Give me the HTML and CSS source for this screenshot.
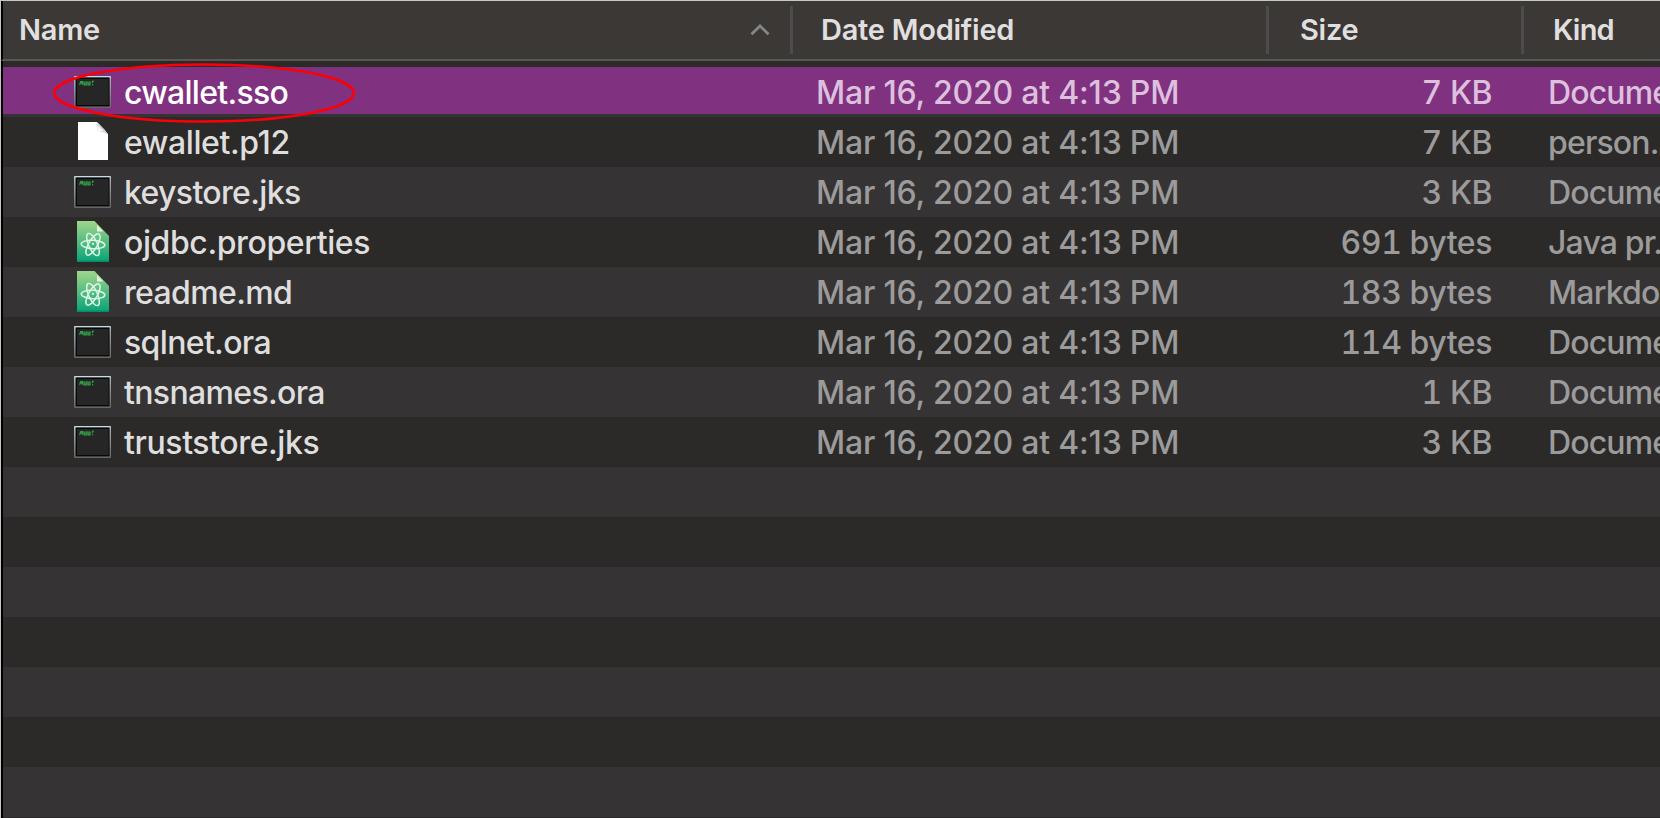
FILE: index.html
```html
<!DOCTYPE html>
<html lang="en">
<head>
<meta charset="utf-8">
<title>Files</title>
<link rel="stylesheet" href="styles.css">
</head>
<body>
<svg class="defs" width="0" height="0" aria-hidden="true">
  <defs>
    <linearGradient id="frame" x1="0" y1="0" x2="0" y2="1"><stop offset="0" stop-color="#c9e2ea"/><stop offset=".1" stop-color="#a3b0b6"/><stop offset="1" stop-color="#656565"/></linearGradient>
    <linearGradient id="green" x1="0" y1="0" x2="0" y2="1"><stop offset="0" stop-color="#a2d58b"/><stop offset=".5" stop-color="#55bd80"/><stop offset="1" stop-color="#08a377"/></linearGradient>
    <symbol id="exec" viewBox="0 0 37 32">
      <rect width="37" height="32" rx="1" fill="url(#frame)"/>
      <rect x="1.6" y="1.4" width="34" height="29" fill="#080808"/>
      <rect x="3" y="3" width="31.6" height="26" fill="#262626"/>
      <path d="M5.6 8.8L6.8 5.6H8.4V8.8M6.4 7.2H8.4M10 5.3V8.8H12.2V5.3M10 7H12M13.9 5.3V8.8H16V5.3M14 7H16M18 5.3H19.2L18 7M18 8.6H19.2" stroke="#2fa547" stroke-width="1.2" fill="none"/>
    </symbol>
    <symbol id="page" viewBox="0 0 30 38">
      <path d="M0 0H19L30 12V38H0Z" fill="#fff"/>
      <path d="M18 0Q20 3 19 9Q24 9 30 13Q27 7 23 4Q21 1 18 0Z" fill="#d9d9d9"/>
      <path d="M19.5 3.5V9H25Z" fill="#fafafa"/>
    </symbol>
    <symbol id="atom" viewBox="0 0 32 41">
      <path d="M0 0H17.5L32 15V41H0Z" fill="url(#green)"/>
      <path d="M0 40.3H32" stroke="#078c68" stroke-width="1.4"/>
      <path d="M20 4V10.5H26.5Z" fill="#e3f3dc"/>
      <g fill="none" stroke="#dff6e7" stroke-width="1.5" transform="translate(16 23.5)">
        <ellipse rx="11.8" ry="4.2" transform="rotate(3)"/>
        <ellipse rx="12" ry="4.4" transform="rotate(66)"/>
        <ellipse rx="12" ry="4.4" transform="rotate(120)"/>
      </g>
      <circle cx="16" cy="22.8" r="1.1" fill="#f0fff6"/>
    </symbol>
  </defs>
</svg>
<main class="window">
  <header class="head">
    <div class="th th-name">Name<svg class="sort" viewBox="0 0 20 12"><path d="M1.5 10.2L10 2L18.5 10.2" fill="none" stroke="#878686" stroke-width="2.8"/></svg></div>
    <div class="th th-date">Date Modified</div>
    <div class="th th-size">Size</div>
    <div class="th th-kind">Kind</div>
  </header>
  <section class="list">
    <div class="row selected"><div class="icon"><svg class="exec"><use href="#exec"/></svg></div><div class="name">cwallet.sso</div><div class="date">Mar 16, 2020 at 4:13 PM</div><div class="size">7 KB</div><div class="kind">Docume</div>
      <svg class="ring" viewBox="0 0 304 62"><ellipse cx="152" cy="31" rx="149.8" ry="28.5" fill="none" stroke="#fc0006" stroke-width="2.6"/></svg>
    </div>
    <div class="row"><div class="icon"><svg class="page"><use href="#page"/></svg></div><div class="name">ewallet.p12</div><div class="date">Mar 16, 2020 at 4:13 PM</div><div class="size">7 KB</div><div class="kind">person..</div></div>
    <div class="row"><div class="icon"><svg class="exec"><use href="#exec"/></svg></div><div class="name tight">keystore.jks</div><div class="date">Mar 16, 2020 at 4:13 PM</div><div class="size">3 KB</div><div class="kind">Docume</div></div>
    <div class="row"><div class="icon"><svg class="atom"><use href="#atom"/></svg></div><div class="name">ojdbc.properties</div><div class="date">Mar 16, 2020 at 4:13 PM</div><div class="size">691 bytes</div><div class="kind">Java pr.</div></div>
    <div class="row"><div class="icon"><svg class="atom"><use href="#atom"/></svg></div><div class="name tight">readme.md</div><div class="date">Mar 16, 2020 at 4:13 PM</div><div class="size">183 bytes</div><div class="kind">Markdo</div></div>
    <div class="row"><div class="icon"><svg class="exec"><use href="#exec"/></svg></div><div class="name tight">sqlnet.ora</div><div class="date">Mar 16, 2020 at 4:13 PM</div><div class="size">114 bytes</div><div class="kind">Docume</div></div>
    <div class="row"><div class="icon"><svg class="exec"><use href="#exec"/></svg></div><div class="name tight">tnsnames.ora</div><div class="date">Mar 16, 2020 at 4:13 PM</div><div class="size">1 KB</div><div class="kind">Docume</div></div>
    <div class="row"><div class="icon"><svg class="exec"><use href="#exec"/></svg></div><div class="name">truststore.jks</div><div class="date">Mar 16, 2020 at 4:13 PM</div><div class="size">3 KB</div><div class="kind">Docume</div></div>
    <div class="row"></div><div class="row"></div><div class="row"></div><div class="row"></div><div class="row"></div><div class="row"></div><div class="row"></div>
  </section>
</main>
</body>
</html>
```
FILE: styles.css
```css
* { box-sizing: border-box; }
body { margin: 0; background: #2b2a28; font-family: Inter, "Liberation Sans", sans-serif; }
.defs { position: absolute; }
.window {
  width: 1660px;
  height: 818px;
  overflow: hidden;
  border-top: 1px solid #c3cac4;
  border-left: 1px solid #c3c6c6;
  background: #2b2a28;
  display: flex;
  flex-direction: column;
}
.head, .list { border-left: 2px solid #000; }
.head {
  flex: none;
  height: 60px;
  display: flex;
  padding-top: 5px;
  background: #3c3836;
  border-bottom: 2px solid #575755;
  color: #e0dfdf;
  font-size: 29px;
  font-weight: 570;
  letter-spacing: -0.25px;
}
.th { flex: none; height: 48px; line-height: 48px; white-space: nowrap; border-right: 3px solid #4d4b4b; }
.th-name { width: 790px; padding: 0 20px 0 16px; display: flex; align-items: center; justify-content: space-between; }
.th-date { width: 476px; padding-left: 28px; }
.th-size { width: 255px; padding-left: 31px; }
.th-kind { flex: 1; padding-left: 29px; border: 0; letter-spacing: -0.8px; }
.sort { width: 20px; height: 12px; }
.list { flex: 1; padding-top: 6px; overflow: hidden; }
.row {
  position: relative;
  display: grid;
  grid-template-columns: 121px 692px 422px 254px 1fr;
  height: 50px;
  line-height: 52px;
  font-size: 32px;
  font-weight: 460;
  letter-spacing: -0.2px;
  white-space: nowrap;
  color: #9c9b9b;
}
.row:nth-child(odd) { background: #363334; }
.name { color: #dfdede; letter-spacing: -0.4px; }
.tight { letter-spacing: -0.65px; }
.selected { color: #dcc0dd; }
.row.selected { background: linear-gradient(#80317f 47px, #363334 47px); }
.selected .name { color: #fff; font-weight: 540; letter-spacing: -0.7px; }
.icon { display: flex; align-items: center; justify-content: center; height: 50px; padding-left: 58px; }
.exec { width: 37px; height: 32px; }
.page { width: 30px; height: 38px; margin-bottom: 2px; }
.atom { width: 32px; height: 41px; margin-bottom: 2px; }
.size { text-align: right; font-feature-settings: "tnum"; letter-spacing: -0.45px; }
.kind { padding-left: 56px; overflow: hidden; letter-spacing: -0.85px; }
.ring { position: absolute; left: 49px; top: -5px; width: 304px; height: 62px; z-index: 1; }
```
